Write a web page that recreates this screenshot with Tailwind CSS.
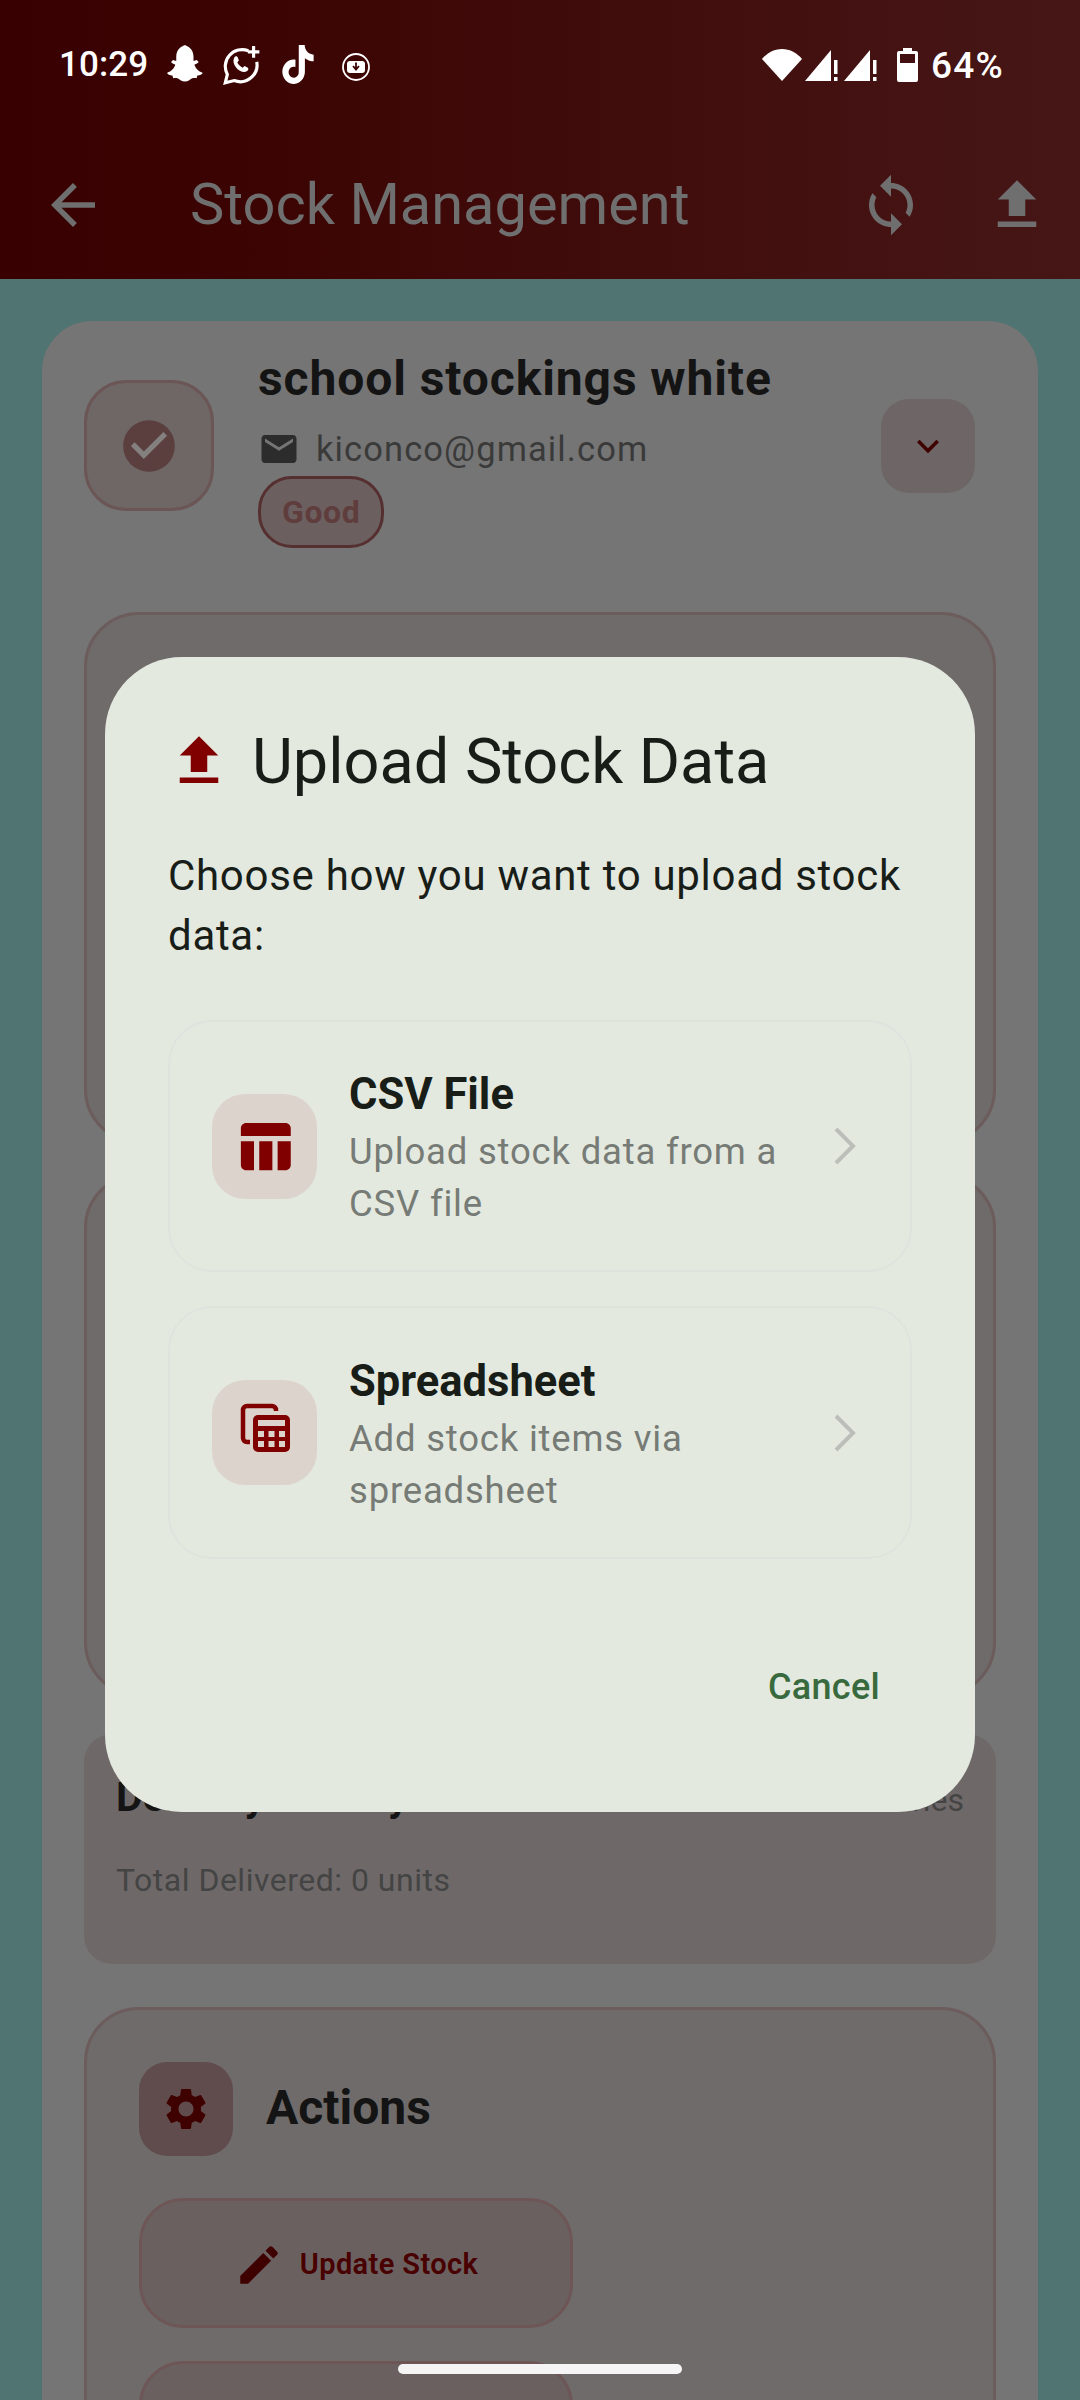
<!doctype html>
<html>
<head>
<meta charset="utf-8">
<script src="https://cdn.jsdelivr.net/npm/@tailwindcss/browser@4"></script>
</head>
<body class="m-0 overflow-hidden">
<div class="relative w-[1080px] h-[2400px] overflow-hidden bg-[#4f7472] font-['Roboto',sans-serif]">
  <!-- App bar -->
  <header class="h-[279px] bg-gradient-to-r from-[#380000] to-[#461616]">
    <div class="h-[130px] flex items-center text-white">
      <span class="ml-[59px] text-[35px] font-medium tracking-[0.1px] font-['Roboto',sans-serif]">10:29</span>
      <svg class="ml-[11px]" width="46" height="46" viewBox="0 0 24 24" fill="#fff"><path d="M12 1.500c3.700 0 6 2.700 6 6v2.400l1.700-.5 1 1c-.4.8-1.900 1.100-2.200 1.500.5 1.900 2.100 3.500 4.200 4.100.2.9-1.600 1.300-2.700 1.500l-.4 1.400c-1.700-.2-2.800.1-3.800 1-1.500 1-3.100 1-4.600 0-1-.9-2.100-1.200-3.800-1l-.4-1.400c-1.100-.2-2.900-.6-2.700-1.500 2.100-.6 3.700-2.200 4.200-4.100-.3-.4-1.800-.7-2.200-1.500l1-1 1.700.5V7.500c0-3.300 2.300-6 6-6z"/></svg>
      <svg class="ml-[15px]" width="42" height="42" viewBox="0 0 40 40" fill="none" stroke="#fff" stroke-width="3"><path d="M27 6.500A16 16 0 0 0 7 29l-2 8 8.500-2.200A16 16 0 0 0 35 17"/><path d="M13.500 13c1.500-2 3-1.500 3.500 0l1 2.500-1.500 2c1 2 2.500 3.500 5 5l2-1.500 3 1.500c1 1 .5 2.500-1 3.500-3 2-7.500-.5-10-3.500-2.500-3-3.500-6.500-2-9.500z" fill="#fff" stroke="none"/><path d="M32 2v11M26.500 7.500h11" stroke-width="3"/></svg>
      <svg class="ml-[18px] -mt-[2px]" width="36" height="39" viewBox="0 0 24 24" preserveAspectRatio="none" fill="#fff"><path d="M12.525.02c1.310-.02 2.610-.01 3.910-.02.08 1.530.63 3.090 1.750 4.170 1.120 1.110 2.700 1.620 4.240 1.790v4.030c-1.440-.05-2.890-.35-4.200-.97-.57-.26-1.100-.59-1.620-.93-.01 2.920.01 5.840-.02 8.750-.08 1.400-.54 2.790-1.350 3.940-1.310 1.920-3.580 3.170-5.910 3.210-1.430.08-2.860-.31-4.080-1.030-2.020-1.190-3.440-3.370-3.650-5.710-.02-.5-.03-1-.01-1.490.18-1.900 1.120-3.720 2.580-4.960 1.660-1.440 3.980-2.130 6.150-1.720.02 1.480-.04 2.960-.04 4.440-.99-.32-2.150-.23-3.020.37-.63.41-1.110 1.040-1.360 1.750-.21.51-.15 1.070-.14 1.610.24 1.640 1.820 3.020 3.500 2.870 1.120-.01 2.190-.66 2.770-1.610.19-.33.4-.67.41-1.060.1-1.790.06-3.570.07-5.360.01-4.030-.01-8.050.02-12.070z"/></svg>
      <svg class="ml-[25px] mt-[3px]" width="30" height="30" viewBox="0 0 30 30" fill="none"><circle cx="15" cy="15" r="13" stroke="#fff" stroke-width="1.800"/><rect x="6" y="9" width="18" height="12" rx="3" fill="#fff"/><path d="M15 10.500v6M12 14l3 3.500 3-3.500" stroke="#3c0505" stroke-width="1.800"/></svg>
      <div class="ml-auto flex items-center mr-[76px]">
        <svg width="40" height="32" viewBox="0 0 40 32" fill="#fff"><path d="M20 32L0 10C5 4 12 0 20 0s15 4 20 10z"/></svg>
        <svg class="ml-[3px]" width="35" height="34" viewBox="0 0 35 34" fill="#fff"><path d="M0 33L26 2v31z"/><rect x="29" y="12" width="3.500" height="14"/><rect x="29" y="29" width="3.500" height="4"/></svg>
        <svg class="ml-[4px]" width="35" height="34" viewBox="0 0 35 34" fill="#fff"><path d="M0 33L26 2v31z"/><rect x="29" y="12" width="3.500" height="14"/><rect x="29" y="29" width="3.500" height="4"/></svg>
        <svg class="ml-[18px]" width="21" height="34" viewBox="0 0 21 34" fill="none"><path d="M6 0h9v3h4a2 2 0 0 1 2 2v27a2 2 0 0 1-2 2H2a2 2 0 0 1-2-2V5a2 2 0 0 1 2-2h4z" fill="#fff"/><rect x="3" y="6" width="15" height="9" fill="#421010"/></svg>
        <span class="ml-[13px] text-[37px] leading-none font-medium tracking-[1.200px]">64%</span>
      </div>
    </div>
    <div class="h-[149px] flex items-center pl-[40px] pr-[30px] text-[#6f6f6f]">
      <svg width="66" height="66" viewBox="0 0 24 24" fill="#6f6f6f"><path d="M20 11H7.830l5.590-5.590L12 4l-8 8 8 8 1.410-1.410L7.830 13H20v-2z"/></svg>
      <h1 class="ml-[84px] text-[57.750px] leading-none font-normal">Stock Management</h1>
      <svg class="ml-auto" width="66" height="66" viewBox="0 0 24 24" fill="#6f6f6f"><path d="M12 4V1L8 5l4 4V6c3.310 0 6 2.690 6 6 0 1.010-.25 1.970-.7 2.800l1.460 1.460C19.540 15.030 20 13.570 20 12c0-4.420-3.580-8-8-8zm0 14c-3.310 0-6-2.690-6-6 0-1.010.25-1.970.7-2.800L5.240 7.740C4.460 8.970 4 10.430 4 12c0 4.420 3.580 8 8 8v3l4-4-4-4v3z"/></svg>
      <svg class="ml-[60px]" width="66" height="66" viewBox="0 0 24 24" fill="#6f6f6f"><path d="M9 16h6v-6h4l-7-7-7 7h4zm-4 2h14v2H5z"/></svg>
    </div>
  </header>

  <!-- Dimmed page card -->
  <main class="mx-[42px] mt-[42px] bg-[#757575] rounded-t-[50px] pt-[31px] h-[2200px]">
    <div class="flex items-start pl-[42px] pr-[63px]">
      <div class="mt-[28px] w-[130px] h-[131px] rounded-[42px] bg-[#6f6666] border-[3px] border-[#6b5555] flex items-center justify-center">
        <svg width="62" height="62" viewBox="0 0 24 24"><circle cx="12" cy="12" r="10" fill="#5b3e3e"/><path d="M10 17l-5-5 1.410-1.410L10 14.170l7.590-7.590L19 8z" fill="#858080"/></svg>
      </div>
      <div class="ml-[44px] pt-[1px] flex flex-col items-start">
        <div class="text-[48px] leading-[52px] font-bold text-[#141414] tracking-[0.9px]">school stockings white</div>
        <div class="mt-[26px] h-[36px] flex items-center text-[#3a3a3a]">
          <svg width="42" height="42" viewBox="0 0 24 24" fill="#2c2c2c"><path d="M20 4H4c-1.100 0-1.990.9-1.990 2L2 18c0 1.100.9 2 2 2h16c1.100 0 2-.9 2-2V6c0-1.100-.9-2-2-2zm0 4l-8 5-8-5V6l8 5 8-5v2z"/></svg>
          <span class="ml-[16px] text-[34.500px] leading-none tracking-[1.100px]">kiconco@gmail.com</span>
        </div>
        <div class="mt-[9px] h-[72px] px-[21px] rounded-[34px] bg-[#6c5f5f] border-[3px] border-[#563030] flex items-center text-[#5f3d3d] text-[32px] font-bold tracking-[0.6px]">Good</div>
      </div>
      <div class="ml-auto mt-[47px] w-[94px] h-[94px] rounded-[28px] bg-[#6e6666] flex items-center justify-center">
        <svg width="44" height="44" viewBox="0 0 24 24" fill="#3f0000"><path d="M16.590 8.590L12 13.170 7.410 8.590 6 10l6 6 6-6z"/></svg>
      </div>
    </div>

    <section class="ml-[42px] mr-[42px] mt-[64px] h-[532px] rounded-[55px] bg-[#6f6b6a] border-[3px] border-[#6c5c5c]"></section>
    <section class="ml-[42px] mr-[42px] mt-[29px] h-[524px] rounded-[55px] bg-[#6f6b6a] border-[3px] border-[#6c5c5c]"></section>

    <section class="ml-[42px] mr-[42px] mt-[37px] h-[230px] rounded-[28px] bg-[#6e6968] pt-[41px] px-[32px]">
      <div class="flex justify-between items-baseline">
        <span class="text-[41px] leading-[44px] font-bold text-[#141414]">Delivery History</span>
        <span class="text-[32px] text-[#444]">0 deliveries</span>
      </div>
      <div class="mt-[38px] text-[32px] leading-[36px] text-[#444] tracking-[0.5px]">Total Delivered: 0 units</div>
    </section>

    <section class="ml-[42px] mr-[42px] mt-[43px] rounded-[55px] bg-[#6f6b6a] border-[3px] border-[#6c5c5c] pl-[52px] pt-[52px] h-[500px]">
      <div class="flex items-center">
        <div class="w-[94px] h-[94px] rounded-[28px] bg-[#604c4c] flex items-center justify-center">
          <svg width="50" height="50" viewBox="0 0 24 24" fill="#3f0000"><path d="M19.140 12.940c.04-.3.06-.61.06-.94 0-.32-.02-.64-.07-.94l2.030-1.580c.18-.14.23-.41.12-.61l-1.920-3.320c-.12-.22-.37-.29-.59-.22l-2.390.96c-.5-.38-1.030-.7-1.620-.94l-.36-2.540c-.04-.24-.24-.41-.48-.41h-3.840c-.24 0-.43.17-.47.41l-.36 2.540c-.59.24-1.130.57-1.620.94l-2.390-.96c-.22-.08-.47 0-.59.22L2.740 8.870c-.12.21-.08.47.12.61l2.030 1.580c-.05.3-.09.63-.09.94s.02.64.07.94l-2.030 1.580c-.18.14-.23.41-.12.61l1.920 3.320c.12.22.37.29.59.22l2.390-.96c.5.38 1.030.7 1.620.94l.36 2.540c.05.24.24.41.48.41h3.840c.24 0 .44-.17.47-.41l.36-2.540c.59-.24 1.130-.56 1.620-.94l2.390.96c.22.08.47 0 .59-.22l1.920-3.320c.12-.22.07-.47-.12-.61l-2.010-1.580zM12 15.600c-1.980 0-3.600-1.620-3.600-3.600s1.620-3.600 3.600-3.600 3.600 1.620 3.600 3.600-1.620 3.600-3.600 3.600z"/></svg>
        </div>
        <span class="ml-[33px] -mt-[2px] text-[48px] font-bold text-[#141414]">Actions</span>
      </div>
      <div class="mt-[42px] w-[434px] h-[130px] pt-[3px] rounded-[44px] bg-[#6a6060] border-[3px] border-[#6e5656] flex items-center justify-center">
        <svg width="50" height="50" viewBox="0 0 24 24" fill="#3f0000"><path d="M3 17.250V21h3.750L17.810 9.940l-3.750-3.750L3 17.250zM20.710 7.040c.39-.39.39-1.020 0-1.410l-2.340-2.340c-.39-.39-1.020-.39-1.410 0l-1.830 1.830 3.750 3.750 1.830-1.830z"/></svg>
        <span class="ml-[16px] text-[29px] font-semibold text-[#480000] tracking-[0.4px]">Update Stock</span>
      </div>
      <div class="mt-[33px] w-[434px] h-[130px] rounded-[44px] bg-[#6a6060] border-[3px] border-[#6e5656]"></div>
    </section>
  </main>

  <!-- Dialog -->
  <div class="absolute left-[105px] top-[657px] w-[870px] h-[1155px] rounded-[77px] bg-[#e4e9e0] pt-[65px] px-[63px] text-[#181d18]">
    <div class="flex items-center h-[77px]">
      <svg class="-ml-[2px]" width="66" height="66" viewBox="0 0 24 24" fill="#800000"><path d="M9 16h6v-6h4l-7-7-7 7h4zm-4 2h14v2H5z"/></svg>
      <h2 class="ml-[20px] mt-[2px] text-[63px] leading-none font-normal">Upload Stock Data</h2>
    </div>
    <p class="mt-[47px] text-[42px] leading-[60px] tracking-[0.7px]">Choose how you want to upload stock data:</p>
    <div class="mt-[54px] flex flex-col gap-[34px]">
      <div class="h-[252px] rounded-[44px] border-[2.750px] border-[#dfe3de] flex items-center pl-[42px]">
        <div class="w-[105px] h-[105px] rounded-[33px] bg-[#dcd4cc] flex items-center justify-center shrink-0">
          <svg width="63" height="63" viewBox="0 0 24 24" fill="#800000"><path d="M10 10.020h5V21h-5zM17 21h3c1.100 0 2-.9 2-2v-9h-5v11zm3-18H5c-1.100 0-2 .9-2 2v3h19V5c0-1.100-.9-2-2-2zM3 19c0 1.100.9 2 2 2h3V10H3v9z"/></svg>
        </div>
        <div class="ml-[32px] w-[470px] mt-[7px]">
          <div class="text-[43.500px] leading-[52px] font-bold">CSV File</div>
          <div class="mt-[5px] text-[36.500px] leading-[52px] text-[#767b76] tracking-[0.8px]">Upload stock data from a CSV file</div>
        </div>
        <svg class="ml-auto mr-[53px]" width="24" height="40" viewBox="0 0 24 40" fill="none" stroke="#bbbeb9" stroke-width="4"><path d="M3 3l17 17L3 37"/></svg>
      </div>
      <div class="h-[253px] rounded-[44px] border-[2.750px] border-[#dfe3de] flex items-center pl-[42px]">
        <div class="w-[105px] h-[105px] rounded-[33px] bg-[#dcd4cc] flex items-center justify-center shrink-0">
          <svg width="63" height="63" viewBox="0 0 63 63" fill="none"><path d="M43 10v-1a4 4 0 0 0-4-4H14a4 4 0 0 0-4 4v28a4 4 0 0 0 4 4h3" stroke="#800000" stroke-width="4.500"/><rect x="20" y="14" width="37" height="37" rx="5" fill="#800000"/><rect x="25" y="19" width="27" height="6" fill="#dcd4cc"/><g fill="#dcd4cc"><rect x="25" y="30" width="6" height="6"/><rect x="35.500" y="30" width="6" height="6"/><rect x="46" y="30" width="6" height="6"/><rect x="25" y="40" width="6" height="6"/><rect x="35.500" y="40" width="6" height="6"/><rect x="46" y="40" width="6" height="6"/></g></svg>
        </div>
        <div class="ml-[32px] w-[470px] mt-[7px]">
          <div class="text-[43.500px] leading-[52px] font-bold">Spreadsheet</div>
          <div class="mt-[5px] text-[36.500px] leading-[52px] text-[#767b76] tracking-[0.8px]">Add stock items via spreadsheet</div>
        </div>
        <svg class="ml-auto mr-[53px]" width="24" height="40" viewBox="0 0 24 40" fill="none" stroke="#bbbeb9" stroke-width="4"><path d="M3 3l17 17L3 37"/></svg>
      </div>
    </div>
    <div class="mt-[106px] flex justify-end pr-[32px]">
      <button class="text-[36px] leading-[44px] font-medium text-[#386a3e] tracking-[0.3px]">Cancel</button>
    </div>
  </div>

  <!-- Gesture pill -->
  <div class="absolute left-[398px] top-[2364px] w-[284px] h-[10px] rounded-full bg-[#f5f5f5]"></div>
</div>
</body>
</html>
